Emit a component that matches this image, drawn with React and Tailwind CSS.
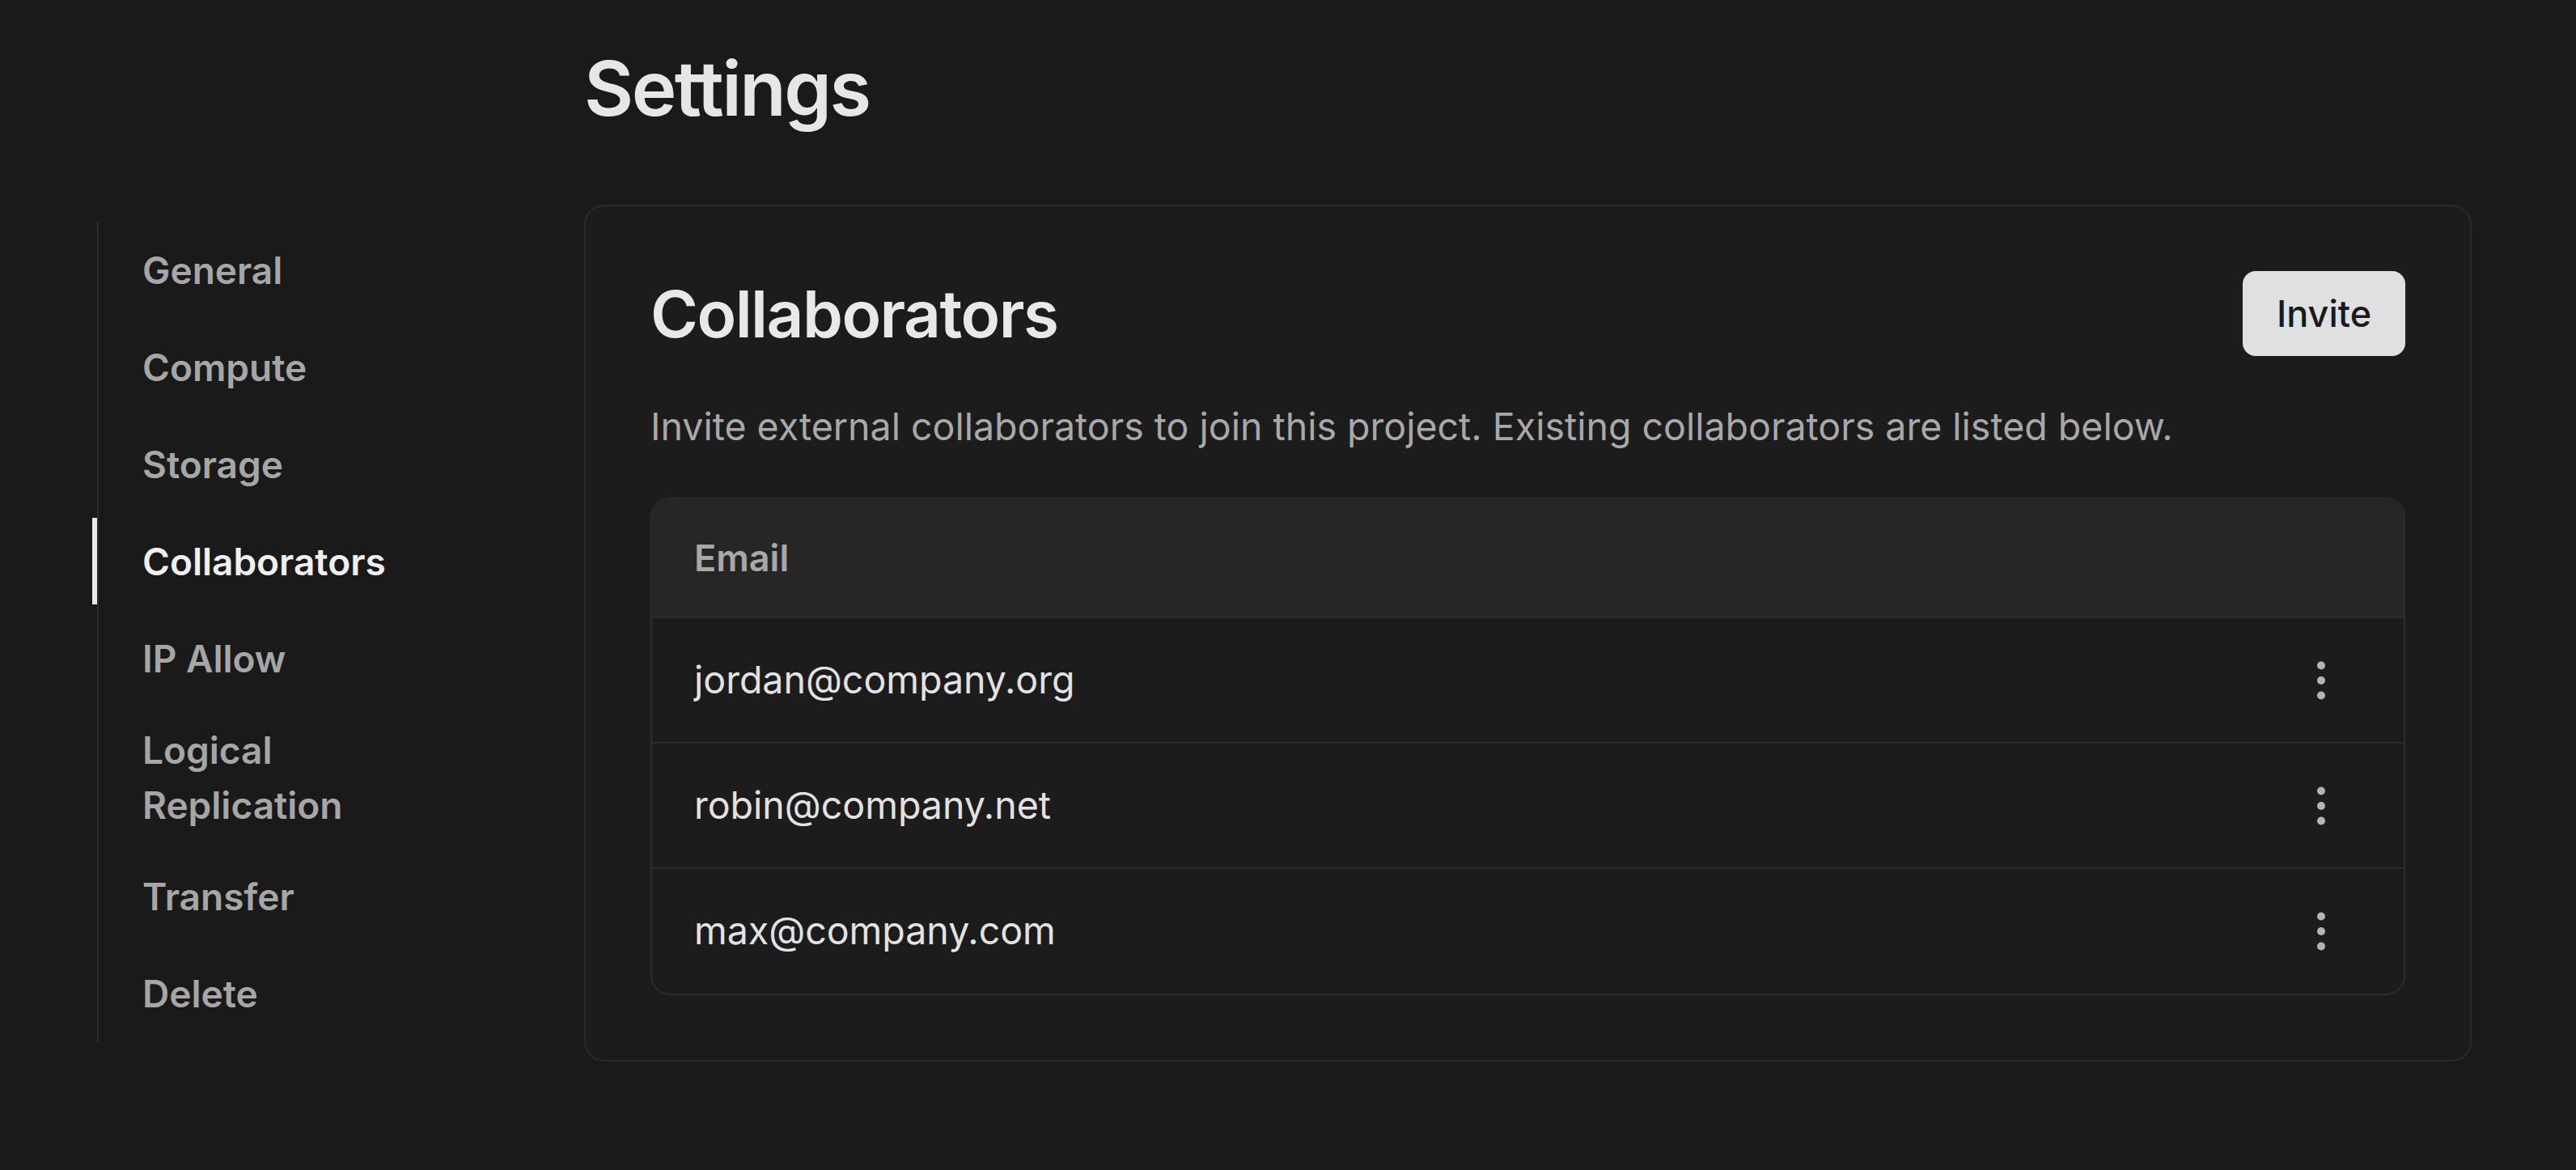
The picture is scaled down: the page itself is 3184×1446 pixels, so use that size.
import React from 'react'

const navItems = [
    { label: 'General' },
    { label: 'Compute' },
    { label: 'Storage' },
    { label: 'Collaborators', active: true },
    { label: 'IP Allow' },
    { label: 'Logical Replication' },
    { label: 'Transfer' },
    { label: 'Delete' },
];

const collaborators = ['jordan@company.org', 'robin@company.net', 'max@company.com'];

function DotsIcon() {
    return (
        <svg width="40" height="60" viewBox="0 0 40 60" fill="#b4b4b4">
            <circle cx="20" cy="11.5" r="5" />
            <circle cx="20" cy="30" r="5" />
            <circle cx="20" cy="48.5" r="5" />
        </svg>
    );
}

function Sidebar() {
    return (
        <nav className="mt-[274px] w-[376px] shrink-0 border-l-2 border-[#2c2c2c] self-start">
            {navItems.map((item) => (
                <div
                    key={item.label}
                    className={`relative flex items-center min-h-[120px] py-[19px] pl-[54px] pr-[20px] text-[46px] leading-[68px] font-semibold ${item.active ? 'text-[#efefef]' : 'text-[#a6a6a6]'}`}
                >
                    {item.active && (
                        <span className="absolute -left-[8px] top-[6px] bottom-[7px] w-[6px] bg-[#e8e8e8]" />
                    )}
                    <span>{item.label}</span>
                </div>
            ))}
        </nav>
    );
}

function App() {
    return (
        <div
            className="min-h-[1446px] w-full bg-[#1a1a1a] flex pl-[120px] pr-[129px]"
            style={{ fontFamily: 'Inter, "Noto Sans", sans-serif' }}
        >
            <Sidebar />

            <main className="flex-1 ml-[226px] pt-[62px]">
                <h1 className="text-[94px] leading-none font-semibold text-[#e6e6e6] tracking-[-2.5px]">Settings</h1>

                <section className="mt-[97px] rounded-[24px] border-2 border-[#2a2a2a] bg-[#1c1c1c] p-[80px]">
                    <div className="flex items-center justify-between">
                        <h2 className="text-[80px] leading-none font-semibold text-[#e8e8e8] tracking-[-1.5px]">Collaborators</h2>
                        <button className="h-[105px] w-[201px] rounded-[16px] bg-[#e0e0e0] text-[45px] font-medium text-[#1a1a1a]">
                            Invite
                        </button>
                    </div>

                    <p className="mt-[53px] text-[46.5px] leading-[68px] text-[#a8a8a8]">
                        Invite external collaborators to join this project. Existing collaborators are listed below.
                    </p>

                    <div className="mt-[54px] rounded-[24px] border-2 border-[#2c2c2c] overflow-hidden">
                        <div className="h-[147px] flex items-center px-[52px] bg-[#262626] border-b-2 border-[#2c2c2c] text-[45px] font-semibold text-[#a8a8a8]">
                            Email
                        </div>
                        {collaborators.map((email, i) => (
                            <div
                                key={email}
                                className={`flex items-center justify-between pl-[52px] pr-[82px] ${i < collaborators.length - 1 ? 'h-[155px] border-b-2 border-[#2c2c2c]' : 'h-[154px]'}`}
                            >
                                <span className="text-[46.5px] text-[#e2e2e2]">{email}</span>
                                <DotsIcon />
                            </div>
                        ))}
                    </div>
                </section>
            </main>
        </div>
    )
}

export default App
